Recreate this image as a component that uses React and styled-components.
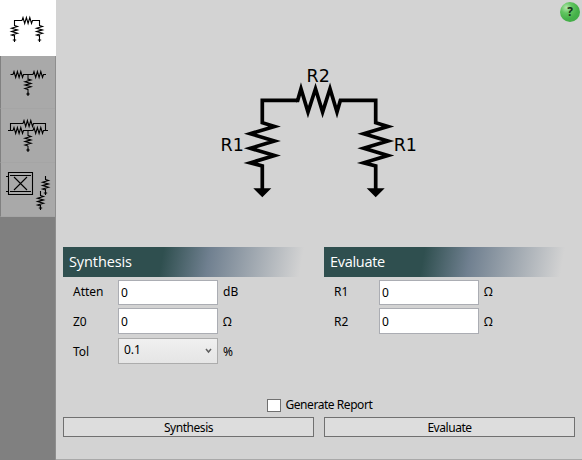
import React from "react";
import styled, { createGlobalStyle } from "styled-components";

const Global = createGlobalStyle`
  *, *::before, *::after { box-sizing: border-box; }
  body { margin: 0; background: #d3d3d3; overflow: hidden; }
`;

const Window = styled.div`
  display: flex;
  width: 582px;
  height: 460px;
  background: #d3d3d3;
  color: #000;
  font: 12px/16px "Noto Sans", "Open Sans", sans-serif;
`;

const Sidebar = styled.nav`
  width: 56px;
  flex: none;
  display: flex;
  flex-direction: column;
  background: #808080;
  border-right: 1px solid #8e8e8e;
`;

const Tab = styled.button`
  display: block;
  flex: none;
  width: ${(p) => (p.$active ? 56 : 55)}px;
  height: ${(p) => p.$height}px;
  padding: 0;
  border: 0 solid #808080;
  border-left-width: ${(p) => (p.$active ? 0 : 1)}px;
  border-bottom: ${(p) => (p.$active ? "0" : "1px solid #a5a5a5")};
  background: ${(p) => (p.$active ? "#fff" : "#a9a9a9")};
  svg { display: block; margin-left: ${(p) => (p.$active ? 0 : -1)}px; }
`;

const Glyph = styled.svg`
  fill: none;
  stroke: #000;
  stroke-width: 1.1;
`;

const Main = styled.main`
  position: relative;
  flex: 1;
  display: flex;
  flex-direction: column;
  border-bottom: 1px solid #a9a9a9;
`;

const Help = styled.button`
  position: absolute;
  top: 2px;
  right: 2px;
  width: 20px;
  height: 20px;
  padding: 0;
  border: 0;
  border-radius: 50%;
  background: radial-gradient(circle at 32% 28%, #b5e6b0 0, #62c560 28%, #45b149 58%, #3fa845 100%);
  color: #16301a;
  font: bold 12px/20px "Open Sans", sans-serif;
  text-align: center;
`;

const Schematic = styled.svg`
  display: block;
  flex: none;
  text {
    font: 17.5px "DejaVu Sans", sans-serif;
    fill: #000;
  }
`;

const Panels = styled.div`
  display: grid;
  grid-template-columns: 261px 251px;
  padding-left: 7px;
  height: 150px;
`;

const Heading = styled.h2`
  width: 241px;
  height: 30px;
  margin: 0;
  padding: 0 0 0 6px;
  background: linear-gradient(100deg, #2f4f4f 0, #2f4f4f 41%, #708090 60%, rgba(211, 211, 211, 0) 98%);
  color: #fff;
  font: 500 14.5px/30px "Open Sans", sans-serif;
  letter-spacing: ${(p) => p.$spacing}px;
`;

const Field = styled.label`
  display: grid;
  grid-template-columns: 45px 100px auto;
  align-items: center;
  height: 26px;
  padding-left: 10px;
  margin: ${(p) => p.$top}px 0 0;
`;

const Caption = styled.span`
  padding-top: ${(p) => p.$drop || 0}px;
`;

const Input = styled.input`
  width: 100px;
  height: ${(p) => p.$height}px;
  padding: 0 2px;
  border: 1px solid #abadb3;
  border-radius: 0;
  background: #fff;
  color: #000;
  font: inherit;
  outline: 0;
`;

const Select = styled.div`
  display: flex;
  justify-content: space-between;
  width: 100px;
  height: 26px;
  padding: 3px 5px 0;
  border: 1px solid #acacac;
  background: linear-gradient(#f0f0f0, #e5e5e5);
  svg { margin: 6px 0 0; }
`;

const Unit = styled(Caption)`
  padding-left: 5px;
`;

const Footer = styled.div`
  display: flex;
  flex-direction: column;
`;

const Report = styled.label`
  display: flex;
  align-items: center;
  height: 16px;
  padding-left: 211px;
  letter-spacing: -0.45px;
`;

const CheckBox = styled.span`
  width: 14px;
  height: 13px;
  margin-right: 4.5px;
  border: 1px solid #707070;
  background: #fff;
`;

const Actions = styled.div`
  display: flex;
  gap: 10px;
  padding: 4px 7px 0;
`;

const Action = styled.button`
  width: 251px;
  height: 20px;
  padding: 1px 0 0;
  border: 1px solid #707070;
  background: #ddd;
  color: #000;
  font: inherit;
  line-height: 18px;
  letter-spacing: -0.45px;
`;

const hz = (x, y) =>
  `M${x} ${y}l1 -3l1.7 6l1.7 -6l1.7 6l1.7 -6l1.7 6l1 -3`;
const vz = (x, y) =>
  `M${x} ${y}l3 1l-6 1.7l6 1.7l-6 1.7l6 1.7l-6 1.7l3 1`;
const ground = (x, y) => `M${x - 1.7} ${y - 0.5}h3.4M${x} ${y - 2}v3.5`;

const PiIcon = () => (
  <Glyph width="56" height="56" viewBox="0 0 56 56">
    <path d={`M14.5 26V20.5H22${hz(22, 20.5)}M32 20.5H39.5V26${vz(14.5, 25.5)}${vz(39.5, 25.5)}M14.5 35V40M39.5 35V40${ground(14.5, 40.5)}${ground(39.5, 40.5)}`} />
  </Glyph>
);

const TeeIcon = () => (
  <Glyph width="56" height="53" viewBox="0 56 56 53">
    <path stroke="#555" strokeWidth="2" d="M28 75V80M28 89V95" />
    <path d={`M10.5 74.5H13${hz(13, 74.5)}M23 74.5H33${hz(33, 74.5)}M43 74.5H46${vz(28, 79)}${ground(28, 94.5)}`} />
  </Glyph>
);

const BridgedTeeIcon = () => (
  <Glyph width="56" height="53" viewBox="0 109 56 53">
    <path stroke="#555" strokeWidth="2" d="M28 131V136M28 146V151" />
    <path d={`M10.5 130.5V123.5H23${hz(23, 123.5)}M33 123.5H45.5V130.5M8 130.5H13${hz(13, 130.5)}M23 130.5H33${hz(33, 130.5)}M43 130.5H48${vz(28, 135.5)}${ground(28, 150.5)}`} />
  </Glyph>
);

const CouplerIcon = () => (
  <Glyph width="56" height="54" viewBox="0 163 56 54">
    <path d="M8.5 172.5H32.5V194.5H8.5ZM10 175.5H31M10 191.5H31M6 176.5H8M6 191.5H8M14 177L27 190M27 177L14 190" />
    <path d={`M45.5 176V180${vz(45.5, 179.5)}M45.5 189V194${ground(45.5, 193.5)}M40.5 191V196${vz(40.5, 195.5)}M40.5 205V209${ground(40.5, 208.5)}`} />
  </Glyph>
);

const shunt = (x) =>
  `V122.7L${x + 12.2} 126.4L${x - 12} 133.7L${x + 12.2} 141L${x - 12} 148.3L${x + 12.2} 155.6L${x - 12} 162.8L${x} 166V190`;

const PiNetwork = () => (
  <Schematic width="526" height="247" viewBox="56 0 526 247">
    <g fill="none" stroke="#000" strokeWidth="3.7" strokeMiterlimit="10">
      <path d={`M297 100.3H262.3${shunt(262.3)}`} />
      <path d={`M296 100.3H297.7L301 88.8L308 112L315.5 88.8L322.6 112L330 88.8L337 112L340.4 100.3H375.7${shunt(375.7)}`} />
    </g>
    <path d="M253.3 188.3H271.3L262.3 197.3ZM366.7 188.3H384.7L375.7 197.3Z" />
    <text x="306.5" y="82">R2</text>
    <text x="220.5" y="151">R1</text>
    <text x="393.7" y="151">R1</text>
  </Schematic>
);

const NumberField = ({ name, unit, top, drop, height = 26 }) => (
  <Field $top={top}>
    <Caption $drop={drop}>{name}</Caption>
    <Input $height={height} defaultValue="0" />
    <Unit $drop={drop}>{unit}</Unit>
  </Field>
);

const tabs = [
  { Icon: PiIcon, height: 56, active: true },
  { Icon: TeeIcon, height: 53 },
  { Icon: BridgedTeeIcon, height: 54 },
  { Icon: CouplerIcon, height: 54 },
];

export default function App() {
  return (
    <Window>
      <Global />
      <Sidebar>
        {tabs.map(({ Icon, height, active }, i) => (
          <Tab key={i} $height={height} $active={active}>
            <Icon />
          </Tab>
        ))}
      </Sidebar>
      <Main>
        <Help>?</Help>
        <PiNetwork />
        <Panels>
          <section>
            <Heading $spacing={-0.1}>Synthesis</Heading>
            <NumberField name="Atten" unit="dB" top={2} height={25} />
            <NumberField name="Z0" unit="Ω" top={3} drop={2} />
            <Field $top={4}>
              <Caption $drop={2}>Tol</Caption>
              <Select>
                0.1
                <svg width="7" height="6" viewBox="0 0 7 6">
                  <path d="M1 1L3.5 4L6 1" fill="none" stroke="#606060" strokeWidth="1.5" />
                </svg>
              </Select>
              <Unit $drop={2}>%</Unit>
            </Field>
          </section>
          <section>
            <Heading $spacing={-0.3}>Evaluate</Heading>
            <NumberField name="R1" unit="Ω" top={2} height={25} />
            <NumberField name="R2" unit="Ω" top={3} drop={2} />
          </section>
        </Panels>
        <Footer>
          <Report>
            <CheckBox />
            Generate Report
          </Report>
          <Actions>
            <Action>Synthesis</Action>
            <Action>Evaluate</Action>
          </Actions>
        </Footer>
      </Main>
    </Window>
  );
}
